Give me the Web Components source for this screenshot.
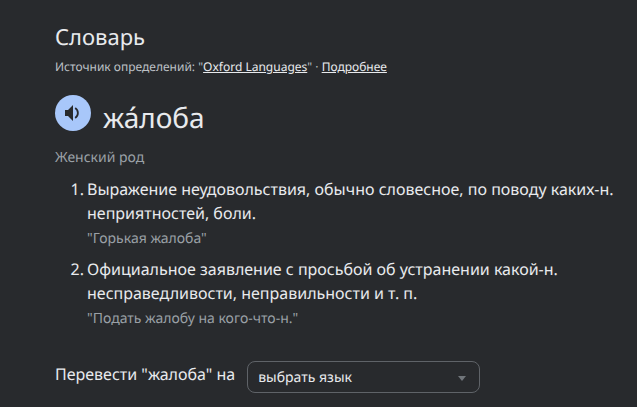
<!DOCTYPE html>
<html lang="ru"><head><meta charset="utf-8">
<style>
html,body{margin:0;height:407px;overflow:hidden;background:#282a2d;font-family:"Noto Sans",sans-serif;text-rendering:geometricPrecision;}
dict-pos+dict-sense{margin-top:9px}
dict-sense+dict-sense{margin-top:8px}
dict-translate{margin-top:33px}
</style></head><body>
<dict-panel>
  <dict-header title="Словарь"></dict-header>
  <dict-word word="жа́лоба"></dict-word>
  <dict-pos>Женский род</dict-pos>
  <dict-sense n="1" example='"Горькая жалоба"'>Выражение неудовольствия, обычно словесное, по поводу каких-н. неприятностей, боли.</dict-sense>
  <dict-sense n="2" example='"Подать жалобу на кого-что-н."'>Официальное заявление с просьбой об устранении какой-н. несправедливости, неправильности и т. п.</dict-sense>
  <dict-translate word="жалоба"></dict-translate>
</dict-panel>
<script>
function def(name,html){
  customElements.define(name,class extends HTMLElement{
    connectedCallback(){
      if(this.shadowRoot)return;
      const s=this.attachShadow({mode:'open'});
      s.innerHTML=html(a=>this.getAttribute(a)||'');
    }
  });
}
def('dict-panel',()=>`<style>:host{display:flex;flex-direction:column;padding:23px 16px 0 55px;box-sizing:border-box;height:407px}</style><slot></slot>`);
def('dict-header',a=>`<style>
:host{display:block;color:#e8eaed}
.t{font-size:22px;line-height:28px;height:28px}
.s{font-size:12px;line-height:16px;color:#bdc1c6;margin-top:8px}
a{color:#e8eaed;text-decoration:underline}
</style><div class="t">${a('title')}</div><div class="s">Источник определений: "<a>Oxford Languages</a>" · <a>Подробнее</a></div>`);
def('dict-word',a=>`<style>
:host{display:flex;gap:12px;margin-top:20px;height:48px;color:#e8eaed}
.b{width:36px;height:36px;border-radius:50%;background:#a8c7fa;display:flex;align-items:center;justify-content:center;flex:none}
.w{font-size:28px;line-height:36px;margin-top:5px}
</style><div class="b"><svg width="24" height="24" viewBox="0 0 24 24"><path fill="#282a2d" d="M4 9v6h3l5 5V4L7 9H4z"/><path fill="none" stroke="#282a2d" stroke-width="1.8" d="M14.2 7a6 6 0 0 1 0 10"/></svg></div><div class="w">${a('word')}</div>`);
def('dict-pos',()=>`<style>:host{display:block;font-size:14px;line-height:20px;color:#9aa0a6;margin-top:5px}</style><slot></slot>`);
def('dict-sense',a=>`<style>
:host{display:grid;grid-template-columns:29px 1fr;column-gap:3px;color:#e8eaed;font-size:16px;line-height:24px}
.n{text-align:right}
.e{font-size:14px;line-height:20px;color:#9aa0a6;margin-top:4px}
</style><div class="n">${a('n')}.</div><div><slot></slot><div class="e">${a('example')}</div></div>`);
def('dict-translate',a=>`<style>
:host{display:flex;align-items:flex-start;gap:12px;color:#e8eaed;font-size:16px;line-height:24px}
span.l{display:block}
.sel{width:233px;height:32px;margin-top:-1px;box-sizing:border-box;border:1px solid #5f6368;border-radius:8px;display:flex;align-items:center;justify-content:space-between;padding:2px 13px 0 10px;font-size:14px;color:#e8eaed}
.a{width:0;height:0;border-left:4px solid transparent;border-right:4px solid transparent;border-top:5px solid #70757a}
</style><span class="l">Перевести "${a('word')}" на</span><div class="sel"><span>выбрать язык</span><span class="a"></span></div>`);
</script>
</body></html>
